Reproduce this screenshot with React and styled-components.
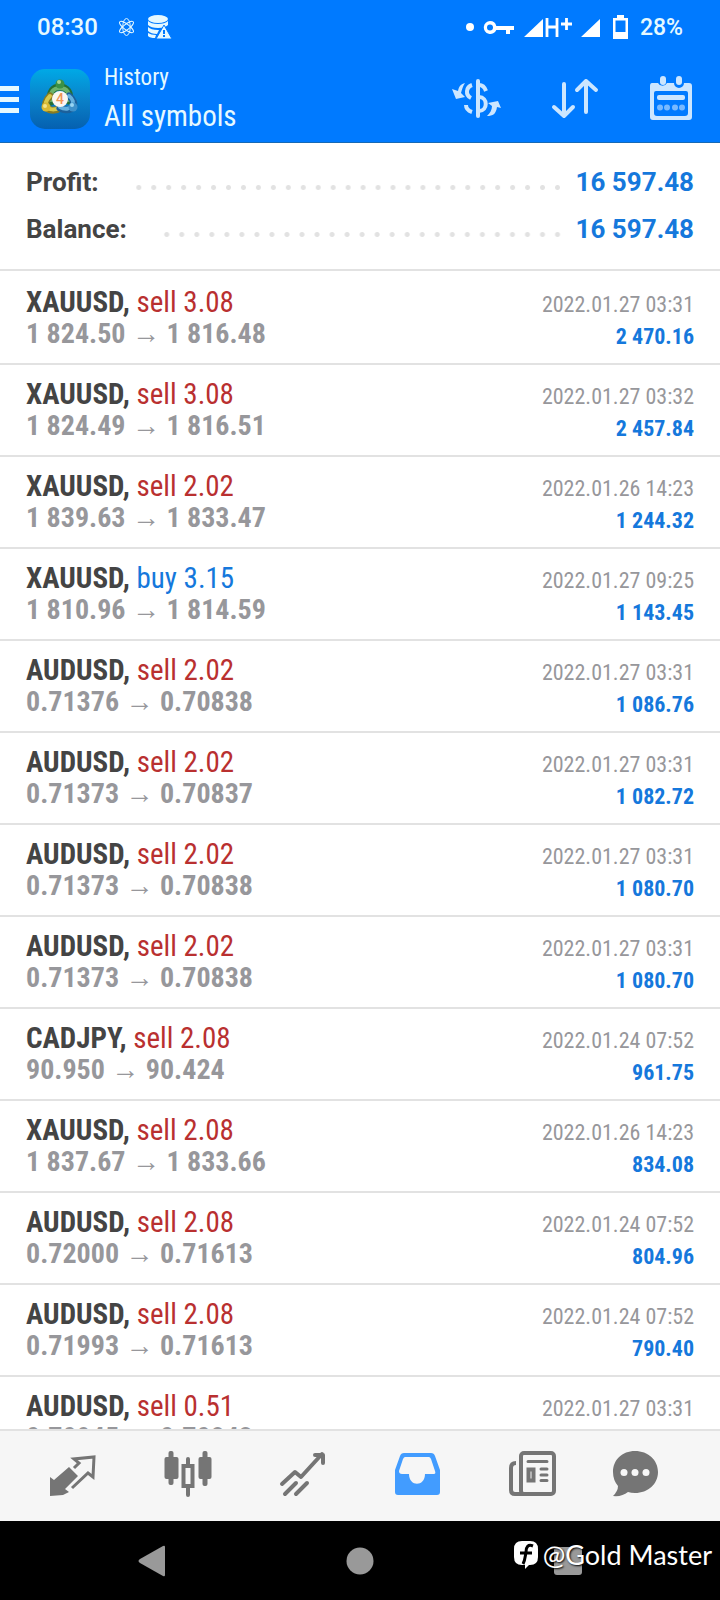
import styled, { createGlobalStyle } from "styled-components";

const GlobalStyle = createGlobalStyle`
  * {
    box-sizing: border-box;
  }
  body {
    margin: 0;
    background-color: #fff;
    font-family: "Roboto Condensed", Roboto, sans-serif;
  }
  button {
    border: none;
    padding: 0;
    background: none;
    color: inherit;
    font: inherit;
    cursor: pointer;
  }
  svg {
    display: block;
  }
`;

const Page = styled.div`
  height: 100vh;
  display: flex;
  flex-direction: column;
`;
const Header = styled.header`
  color: #e6f9ff;
  background-color: #007aff;
  border-bottom: 1px solid #1769b5;
`;
const StatusBar = styled.div`
  height: 54px;
  padding: 0 37px;
  display: flex;
  align-items: center;
  justify-content: space-between;
  font-family: Roboto, sans-serif;
  font-size: 23px;
  font-weight: 500;
`;
const StatusGroup = styled.div`
  display: flex;
  align-items: center;
  gap: ${(p) => p.$gap}px;
`;
const Clock = styled.time`
  margin-right: 7px;
  font-size: 24px;
`;
const Toolbar = styled.div`
  height: 88px;
  padding: 2px 27px 0 0;
  display: flex;
  align-items: center;
`;
const MenuButton = styled.button`
  margin-right: 11px;
`;
const TitleBlock = styled.div`
  margin-left: 14px;
  padding-top: 2px;
  flex: 1;
`;
const Subtitle = styled.p`
  margin: 0;
  font-size: 23px;
  line-height: 32px;
`;
const Title = styled.h1`
  margin: 0;
  font-size: 29px;
  font-weight: 400;
  line-height: 44px;
`;
const Actions = styled.div`
  display: flex;
  gap: 49px;
`;

const Summary = styled.dl`
  margin: 0;
  padding: 15px 26px 17px;
  border-bottom: 2px solid #e2e2e2;
`;
const SummaryRow = styled.div`
  height: 47px;
  display: flex;
  align-items: center;
  font-family: Roboto, sans-serif;
  font-size: 26px;
  font-weight: 700;
`;
const SummaryLabel = styled.dt`
  color: #444;
`;
const Dots = styled.span`
  flex: 1;
  height: 5px;
  margin: 11px 11px 0 32px;
  background: radial-gradient(circle, #e2e2e2 2px, transparent 3px) right / 15px 5px
    round;
`;
const SummaryValue = styled.dd`
  margin: 0;
  color: #1578dc;
`;

const Deals = styled.ul`
  flex: 1;
  min-height: 0;
  margin: 0;
  padding: 2px 0 0;
  overflow: hidden;
  list-style: none;
`;
const Deal = styled.li`
  height: 92px;
  padding: 13px 26px 12px;
  display: flex;
  justify-content: space-between;
  border-bottom: 2px solid #e2e2e2;
  line-height: 32px;
`;
const Symbol = styled.div`
  color: #444;
  font-size: 29px;
  font-weight: 700;
`;
const Side = styled.span`
  color: ${(p) => (p.$type === "buy" ? "#1578dc" : "#b93030")};
  font-weight: 400;
`;
const Prices = styled.div`
  color: #97979b;
  font-size: 28px;
  font-weight: 700;
`;
const Arrow = styled.span`
  font-weight: 400;
`;
const DealResult = styled.div`
  padding-top: 3px;
  text-align: right;
  font-size: 22px;
`;
const Time = styled.div`
  color: #97979b;
`;
const Amount = styled.div`
  color: #1578dc;
  font-weight: 700;
`;

const TabBar = styled.nav`
  height: 92px;
  padding: 0 38px 0 15px;
  display: grid;
  grid-template-columns: repeat(5, 115fr) 92fr;
  border-top: 2px solid #e2e2e2;
  background-color: #f6f6f6;
`;
const Tab = styled.button`
  display: flex;
  align-items: center;
  justify-content: center;
  padding-bottom: 4px;
  color: ${(p) => (p.$active ? "#429cff" : "#757575")};
`;
const SystemBar = styled.nav`
  position: relative;
  height: 79px;
  padding: 0 48px;
  display: grid;
  grid-template-columns: repeat(3, 1fr);
  color: #999;
  background-color: #000;
`;
const SystemButton = styled.button`
  display: flex;
  align-items: center;
  justify-content: center;
`;
const Watermark = styled.div`
  position: absolute;
  right: 8px;
  top: 14px;
  display: flex;
  align-items: center;
  gap: 4px;
  color: #fff;
  font-family: Lato, sans-serif;
  font-size: 27px;
  line-height: 40px;
  text-shadow: 1px 1px 2px #000;
`;

const AtomIcon = () => (
  <svg width="17" height="20" viewBox="0 0 18 20" fill="none" stroke="currentColor">
    <ellipse cx="9" cy="10" rx="4" ry="9" />
    <ellipse cx="9" cy="10" rx="3" ry="9" transform="rotate(52 9 10)" />
    <ellipse cx="9" cy="10" rx="3" ry="9" transform="rotate(-52 9 10)" />
  </svg>
);

const StorageIcon = () => (
  <svg width="24" height="24" viewBox="0 0 24 24" fill="currentColor">
    <ellipse cx="10" cy="4" rx="10" ry="4" />
    <path d="M0 6q3 3 10 3t10-3v4q-3 3-10 3T0 10zM0 12q3 3 10 3h1l-2 4Q3 19 0 16zM0 18q3 2 8 2l-1 3Q2 23 0 21z" />
    <path d="M16 10l8 14H8z" stroke="#007aff" />
    <path d="M15 15h2v4h-2zM15 20h2v2h-2z" fill="#007aff" />
  </svg>
);

const StatusIcons = () => (
  <svg width="164" height="26" viewBox="466 13 164 26" fill="#fff">
    <circle cx="471" cy="26" r="4" />
    <path
      d="M491 20a6.500 6.500 0 1 0 6.300 9h9.700v4h4v-4h4v-4h-17.700a6.500 6.500 0 0 0-6.300-5zm0 3.500a3 3 0 1 1 0 6 3 3 0 0 1 0-6z"
      fillRule="evenodd"
    />
    <path d="M544 18v18h-19zM601 18v18h-19z" />
    <path d="M548 17v19M558 17v19M548 26h10M562 23h11M567.500 17v12" stroke="#fff" strokeWidth="2.800" />
    <path d="M618 14h7v3h4v21h-15V17h4zM616.500 19.500V31h10V19.500z" fillRule="evenodd" />
  </svg>
);

const MenuIcon = () => (
  <svg width="19" height="27" viewBox="0 0 19 27" fill="currentColor">
    <path d="M0 0h19v5H0zM0 11h19v5H0zM0 22h19v5H0z" />
  </svg>
);

const AppLogo = () => (
  <svg width="60" height="60" viewBox="0 0 60 60">
    <defs>
      <linearGradient id="tile" x1="0" y1="0" x2="0" y2="1">
        <stop offset="0" stopColor="#00a9e6" />
        <stop offset="0.5" stopColor="#0a82ca" />
        <stop offset="1" stopColor="#0560b0" />
      </linearGradient>
    </defs>
    <rect width="60" height="60" rx="15" fill="url(#tile)" />
    <g fill="none" strokeLinecap="round">
      <path d="M21 33c-2-10 2-15 9-15s11 6 9 14" stroke="#256f35" strokeWidth="7" />
      <path d="M21 31c-1-8 2-12 9-12s10 5 9 12" stroke="#6cb36c" strokeWidth="4" />
      <path d="M20 27c-4 4-6 9-3 12s9 3 13 0" stroke="#887b22" strokeWidth="7" />
      <path d="M20 27c-4 4-5 8-3 11s8 3 12 1" stroke="#d8c94c" strokeWidth="4" />
      <path d="M39 27c4 3 6 8 4 11s-8 4-13 1" stroke="#1c609b" strokeWidth="7" />
      <path d="M39 27c4 3 5 7 3 10s-7 4-12 1" stroke="#65b1df" strokeWidth="4" />
    </g>
    <circle cx="30" cy="15" r="4.500" fill="#3b9146" />
    <circle cx="29" cy="13" r="2" fill="#a6d695" />
    <circle cx="16" cy="38" r="4.500" fill="#d9b933" />
    <circle cx="15" cy="37" r="2" fill="#f3e38b" />
    <circle cx="43" cy="38" r="4.500" fill="#3e91cb" />
    <circle cx="42" cy="36" r="2" fill="#99d5f3" />
    <circle cx="30" cy="30" r="8" fill="#fbf7f1" />
    <text x="30" y="35" textAnchor="middle" fontFamily="Roboto" fontSize="14" fontWeight="500" fill="#f09555">
      4
    </text>
  </svg>
);

const CurrencyIcon = () => (
  <svg width="50" height="46" viewBox="452 75 50 46" fill="none" stroke="#cce6ff" strokeWidth="4">
    <path d="M479 80v35" strokeLinecap="round" />
    <path d="M473 84c-6 2-7 10-1 13M467 104c0 4 3 6 6 7" />
    <path d="M480 84c4 0 6 3 7 6M480 96c9 0 9 14 0 14" />
    <path
      d="M466 82c-4 1-6 3-7 8l-6-2 4 10 9-2-4-4c1-4 2-7 4-10zM488 115c6 0 9-2 10-9l4 1-3-7-10 2 4 3c0 4-2 7-5 10z"
      fill="#cce6ff"
      stroke="none"
    />
  </svg>
);

const SortIcon = () => (
  <svg
    width="50"
    height="46"
    viewBox="549 75 50 46"
    fill="none"
    stroke="#cce6ff"
    strokeWidth="4"
    strokeLinecap="round"
    strokeLinejoin="round"
  >
    <path d="M563 83v32M553 106l10 9 9-9M585 111V80M576 89l9-9 10 9" />
  </svg>
);

const CalendarIcon = () => (
  <svg width="44" height="46" viewBox="649 75 44 46" fill="#cce6ff">
    <path
      d="M652 82h6a5 5 0 0 0 9 0h7a5 5 0 0 0 10 0h5q3 0 3 3v31q0 3-3 3h-36q-3 0-3-3V85q0-3 2-3zM656 90q-2 0-2 2v20q0 3 3 3h28q3 0 3-3V92q0-2-2-2z"
      fillRule="evenodd"
    />
    <rect x="660" y="75" width="6" height="9" rx="3" />
    <rect x="676" y="75" width="6" height="9" rx="3" />
    <rect x="657" y="94" width="28" height="5" rx="2" />
    <g fill="#78b9ff">
      <circle cx="660" cy="106.500" r="3" />
      <circle cx="667" cy="106.500" r="3" />
      <circle cx="675" cy="106.500" r="3" />
      <circle cx="682" cy="106.500" r="3" />
    </g>
  </svg>
);

const QuotesIcon = () => (
  <svg width="48" height="48" viewBox="49 1450 48 48">
    <path d="M50 1477l4 3 15-13 9 9-13 13 4 3-6 3-13 1z" fill="currentColor" />
    <path
      d="M74 1468l5-5-5-4 20-2-1 20-5-4-16 15"
      fill="none"
      stroke="currentColor"
      strokeWidth="3"
    />
  </svg>
);

const ChartIcon = () => (
  <svg width="48" height="48" viewBox="163.500 1450 48 48" fill="currentColor">
    <rect x="168" y="1451" width="5" height="34" rx="2" />
    <rect x="164" y="1457" width="14" height="22" rx="2" />
    <rect x="202" y="1451" width="5" height="35" rx="2" />
    <rect x="198" y="1457" width="13" height="22" rx="2" />
    <path d="M187.500 1459v6M187.500 1487v8" stroke="currentColor" strokeWidth="4" strokeLinecap="round" />
    <rect x="183" y="1466" width="9" height="20" fill="none" stroke="currentColor" strokeWidth="4" />
  </svg>
);

const TradeIcon = () => (
  <svg
    width="48"
    height="48"
    viewBox="279 1450 48 48"
    fill="none"
    stroke="currentColor"
    strokeWidth="4"
    strokeLinecap="round"
    strokeLinejoin="round"
  >
    <path d="M282 1484l13-12 6 5 21-23M315 1455h8v8M285 1494l11-11M296 1494l11-11" />
  </svg>
);

const HistoryIcon = () => (
  <svg width="48" height="48" viewBox="394 1450 48 48" fill="currentColor">
    <path
      d="M404 1453h27q3 0 4 3l5 14v22q0 3-3 3h-39q-3 0-3-3v-22l5-14q1-3 4-3zM405 1457q-1 0-2 2l-4 12q0 3 3 3h7c0 13 16 13 16 0h9q2 0 1-3l-4-12q-1-2-2-2z"
      fillRule="evenodd"
    />
  </svg>
);

const NewsIcon = () => (
  <svg width="48" height="48" viewBox="509 1450 48 48" fill="none" stroke="currentColor" strokeWidth="4">
    <path d="M516 1463q-5 0-5 5v22q0 4 4 4h12" />
    <rect x="521" y="1453" width="33" height="41" rx="3" />
    <path d="M528 1461.500h19M541 1469h6M541 1475h6M541 1480.500h6" strokeWidth="3" strokeLinecap="round" />
    <rect x="528.500" y="1469.500" width="5" height="11" />
  </svg>
);

const ChatIcon = () => (
  <svg width="48" height="48" viewBox="613 1450 48 48">
    <path
      d="M636 1451c13 0 23 9 23 21s-10 21-23 21q-4 0-7-1-6 5-15 4 5-5 5-10-5-6-5-14c0-12 9-21 22-21z"
      fill="currentColor"
    />
    <g fill="#f6f6f6">
      <circle cx="625" cy="1472.500" r="3.500" />
      <circle cx="636" cy="1472.500" r="3.500" />
      <circle cx="647" cy="1472.500" r="3.500" />
    </g>
  </svg>
);

const BrandIcon = () => (
  <svg width="26" height="30" viewBox="0 0 26 30">
    <path d="M9 1h8q8 0 8 8v8q0 8-8 8h-1l-4 4v-4H9q-8 0-8-8V9q0-8 8-8z" fill="#fff" />
    <path d="M20 6c-5-2-7 1-7 6-1 6-1 8-3 12M7 13h12" fill="none" stroke="#000" strokeWidth="3" />
  </svg>
);

const deals = [
  ["XAUUSD", "sell", "3.08", "1 824.50", "1 816.48", "2022.01.27 03:31", "2 470.16"],
  ["XAUUSD", "sell", "3.08", "1 824.49", "1 816.51", "2022.01.27 03:32", "2 457.84"],
  ["XAUUSD", "sell", "2.02", "1 839.63", "1 833.47", "2022.01.26 14:23", "1 244.32"],
  ["XAUUSD", "buy", "3.15", "1 810.96", "1 814.59", "2022.01.27 09:25", "1 143.45"],
  ["AUDUSD", "sell", "2.02", "0.71376", "0.70838", "2022.01.27 03:31", "1 086.76"],
  ["AUDUSD", "sell", "2.02", "0.71373", "0.70837", "2022.01.27 03:31", "1 082.72"],
  ["AUDUSD", "sell", "2.02", "0.71373", "0.70838", "2022.01.27 03:31", "1 080.70"],
  ["AUDUSD", "sell", "2.02", "0.71373", "0.70838", "2022.01.27 03:31", "1 080.70"],
  ["CADJPY", "sell", "2.08", "90.950", "90.424", "2022.01.24 07:52", "961.75"],
  ["XAUUSD", "sell", "2.08", "1 837.67", "1 833.66", "2022.01.26 14:23", "834.08"],
  ["AUDUSD", "sell", "2.08", "0.72000", "0.71613", "2022.01.24 07:52", "804.96"],
  ["AUDUSD", "sell", "2.08", "0.71993", "0.71613", "2022.01.24 07:52", "790.40"],
  ["AUDUSD", "sell", "0.51", "0.70945", "0.70843", "2022.01.27 03:31", ""],
];

const tabs = [
  { name: "Quotes", Icon: QuotesIcon },
  { name: "Chart", Icon: ChartIcon },
  { name: "Trade", Icon: TradeIcon },
  { name: "History", Icon: HistoryIcon },
  { name: "News", Icon: NewsIcon },
  { name: "Chat", Icon: ChatIcon },
];

const App = () => {
  return (
    <Page>
      <GlobalStyle />
      <Header>
        <StatusBar>
          <StatusGroup $gap={13}>
            <Clock>08:30</Clock>
            <AtomIcon />
            <StorageIcon />
          </StatusGroup>
          <StatusGroup $gap={11}>
            <StatusIcons />
            <span>28%</span>
          </StatusGroup>
        </StatusBar>
        <Toolbar>
          <MenuButton aria-label="Menu">
            <MenuIcon />
          </MenuButton>
          <AppLogo />
          <TitleBlock>
            <Subtitle>History</Subtitle>
            <Title>All symbols</Title>
          </TitleBlock>
          <Actions>
            <button aria-label="Symbols">
              <CurrencyIcon />
            </button>
            <button aria-label="Sort">
              <SortIcon />
            </button>
            <button aria-label="Period">
              <CalendarIcon />
            </button>
          </Actions>
        </Toolbar>
      </Header>

      <Summary>
        <SummaryRow>
          <SummaryLabel>Profit:</SummaryLabel>
          <Dots />
          <SummaryValue>16 597.48</SummaryValue>
        </SummaryRow>
        <SummaryRow>
          <SummaryLabel>Balance:</SummaryLabel>
          <Dots />
          <SummaryValue>16 597.48</SummaryValue>
        </SummaryRow>
      </Summary>

      <Deals>
        {deals.map(([symbol, type, lots, open, close, time, amount], i) => (
          <Deal key={i}>
            <div>
              <Symbol>
                {symbol}, <Side $type={type}>{type} {lots}</Side>
              </Symbol>
              <Prices>
                {open} <Arrow>→</Arrow> {close}
              </Prices>
            </div>
            <DealResult>
              <Time>{time}</Time>
              <Amount>{amount}</Amount>
            </DealResult>
          </Deal>
        ))}
      </Deals>

      <TabBar>
        {tabs.map(({ name, Icon }) => (
          <Tab key={name} aria-label={name} $active={name === "History"}>
            <Icon />
          </Tab>
        ))}
      </TabBar>
      <SystemBar>
        <SystemButton aria-label="Back">
          <svg width="28" height="32" viewBox="0 0 28 32" fill="currentColor">
            <path d="M25 1q2-1 2 1v28q0 2-2 1L2 18q-3-2 0-4z" />
          </svg>
        </SystemButton>
        <SystemButton aria-label="Home">
          <svg width="28" height="28" fill="currentColor">
            <circle cx="14" cy="14" r="13.500" />
          </svg>
        </SystemButton>
        <SystemButton aria-label="Recent apps">
          <svg width="28" height="28" fill="currentColor">
            <rect width="28" height="28" rx="3" />
          </svg>
        </SystemButton>
        <Watermark>
          <BrandIcon />
          @Gold Master
        </Watermark>
      </SystemBar>
    </Page>
  );
};

export default App;
